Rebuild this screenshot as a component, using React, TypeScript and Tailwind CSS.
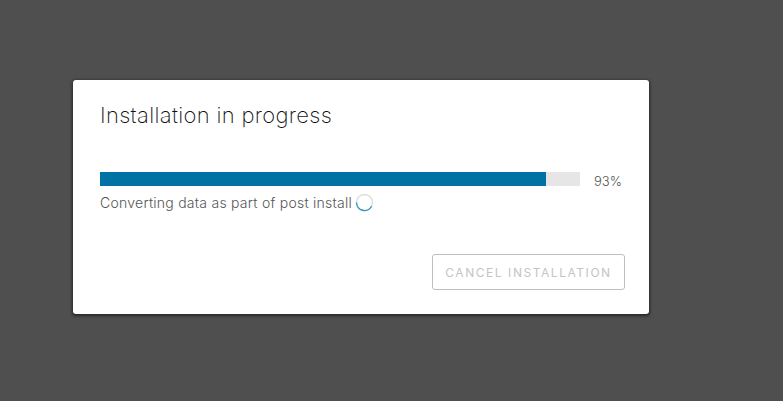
export default function App() {
  return (
    <div className="h-[401px] w-[783px] overflow-hidden bg-[#4f4f4f] pl-[73px] pt-20 font-['Inter','Liberation_Sans',sans-serif]">
      <div className="h-[234px] w-[576px] rounded-[3px] bg-white pl-[27px] pr-6 pt-[21px] shadow-[0_1px_3px_1px_rgba(0,0,0,0.5)]">
        <h1 className="text-[22px] font-extralight leading-[28px] tracking-[0.33px] text-[#111111]">Installation in progress</h1>

        <div className="mt-10 flex items-center">
          <div className="h-3.5 w-[480px] bg-[#e6e6e6]">
            <div className="h-full w-[93%] bg-[#0072a3]" />
          </div>
          <span className="ml-3.5 mt-[4px] text-[13px] font-light leading-4 text-[#565656]">93%</span>
        </div>

        <div className="mt-[3px] flex h-5 items-center text-[14px] font-light tracking-[0.25px] text-[#565656]">
          <span>Converting data as part of post install</span>
          <svg className="ml-[3px] mt-px h-[19px] w-[19px]" viewBox="0 0 19 19" fill="none">
            <circle cx="9.5" cy="9.5" r="8" stroke="#dcdcdc" strokeWidth="1.4" />
            <path d="M1.5 9.5A8 8 0 0 0 16.6 13.2" stroke="#3f94c4" strokeWidth="1.4" />
          </svg>
        </div>

        <div className="mt-[42px] flex justify-end">
          <button
            disabled
            className="h-9 w-[193px] rounded-[3px] border border-[#bfbfbf] bg-white pt-px text-[12px] font-normal tracking-[1.55px] text-[#c4c4c4]"
          >
            CANCEL INSTALLATION
          </button>
        </div>
      </div>
    </div>
  );
}
